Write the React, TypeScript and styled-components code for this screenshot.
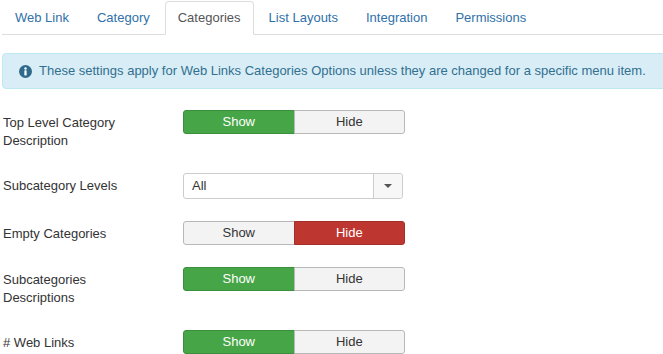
import styled, { createGlobalStyle } from "styled-components";

const GlobalStyle = createGlobalStyle`
  html, body {
    margin: 0;
    padding: 0;
    background: #fff;
    overflow: hidden;
  }
  body {
    font-family: "Liberation Sans", Arial, Helvetica, sans-serif;
    font-size: 13px;
    color: #333;
  }
`;

const Page = styled.div`
  width: 690px;
  padding: 1px 0 0 2px;
`;

const TabList = styled.ul`
  display: flex;
  list-style: none;
  margin: 0 0 18px;
  padding: 0;
  border-bottom: 1px solid #ddd;
`;

const Tab = styled.li<{ $active?: boolean }>`
  margin: 0 2px -1px 0;
  padding: 6px 12px;
  line-height: 20px;
  border: 1px solid ${(p) => (p.$active ? "#ddd" : "transparent")};
  border-bottom-color: ${(p) => (p.$active ? "#fff" : "transparent")};
  border-radius: 4px 4px 0 0;
  background: ${(p) => (p.$active ? "#fff" : "transparent")};
  color: ${(p) => (p.$active ? "#555" : "#3071a9")};
  cursor: pointer;
`;

const Alert = styled.div`
  display: flex;
  align-items: center;
  gap: 7px;
  margin-bottom: 21px;
  padding: 7px 16px;
  line-height: 20px;
  background: #d9edf7;
  border: 1px solid #bce8f1;
  border-radius: 4px;
  color: #31708f;
`;

const Form = styled.div`
  display: flex;
  flex-direction: column;
  gap: 22px;
`;

const ControlGroup = styled.div`
  display: flex;
  align-items: flex-start;
`;

const Label = styled.label`
  width: 180px;
  padding: 4px 0 1px 1px;
  line-height: 18px;
  color: #333;
`;

const BtnGroup = styled.div`
  display: flex;
  width: 222px;
`;

const ToggleBtn = styled.button<{ $tone: "success" | "danger" | "off" }>`
  flex: 1;
  height: 24px;
  padding: 0;
  font-family: inherit;
  font-size: 13px;
  line-height: 22px;
  cursor: pointer;
  border: 1px solid
    ${(p) =>
      p.$tone === "success" ? "#3b8e3b" : p.$tone === "danger" ? "#a52f29" : "#b8b8b8"};
  background: ${(p) =>
    p.$tone === "success" ? "#46a546" : p.$tone === "danger" ? "#bd362f" : "#f3f3f3"};
  color: ${(p) => (p.$tone === "off" ? "#333" : "#fff")};
  &:first-child {
    border-radius: 3px 0 0 3px;
  }
  &:last-child {
    border-radius: 0 3px 3px 0;
    margin-left: -1px;
  }
`;

const Select = styled.div`
  display: flex;
  width: 220px;
  height: 26px;
  box-sizing: border-box;
  border: 1px solid #ccc;
  border-radius: 3px;
  background: #fff;
`;

const SelectValue = styled.div`
  flex: 1;
  padding-left: 8px;
  line-height: 24px;
  color: #333;
`;

const SelectCaret = styled.div`
  width: 28px;
  display: flex;
  align-items: center;
  justify-content: center;
  border-left: 1px solid #ccc;
  background: #f7f7f7;
  border-radius: 0 3px 3px 0;
`;

type Toggle = { label: string[]; value: "show" | "hide"; danger?: boolean };

function ToggleRow({ label, value, danger }: Toggle) {
  return (
    <ControlGroup>
      <Label>
        {label.map((l, i) => (
          <div key={i}>{l}</div>
        ))}
      </Label>
      <BtnGroup>
        <ToggleBtn $tone={value === "show" ? "success" : "off"}>Show</ToggleBtn>
        <ToggleBtn $tone={value === "hide" ? (danger ? "danger" : "success") : "off"}>
          Hide
        </ToggleBtn>
      </BtnGroup>
    </ControlGroup>
  );
}

const tabs = ["Web Link", "Category", "Categories", "List Layouts", "Integration", "Permissions"];

export default function App() {
  return (
    <>
      <GlobalStyle />
      <Page>
        <TabList>
          {tabs.map((t) => (
            <Tab key={t} $active={t === "Categories"}>
              {t}
            </Tab>
          ))}
        </TabList>
        <Alert>
          <svg width="13" height="13" viewBox="0 0 16 16">
            <circle cx="8" cy="8" r="8" fill="#2f6a8c" />
            <circle cx="8" cy="4.3" r="1.5" fill="#fff" />
            <rect x="6.6" y="6.6" width="2.8" height="6.4" rx="0.6" fill="#fff" />
          </svg>
          These settings apply for Web Links Categories Options unless they are changed for a specific menu item.
        </Alert>
        <Form>
          <ToggleRow label={["Top Level Category", "Description"]} value="show" />
          <ControlGroup>
            <Label>Subcategory Levels</Label>
            <Select>
              <SelectValue>All</SelectValue>
              <SelectCaret>
                <svg width="8" height="4" viewBox="0 0 8 4">
                  <path d="M0 0 L8 0 L4 4 Z" fill="#555" />
                </svg>
              </SelectCaret>
            </Select>
          </ControlGroup>
          <ToggleRow label={["Empty Categories"]} value="hide" danger />
          <ToggleRow label={["Subcategories", "Descriptions"]} value="show" />
          <ToggleRow label={["# Web Links"]} value="show" />
        </Form>
      </Page>
    </>
  );
}
